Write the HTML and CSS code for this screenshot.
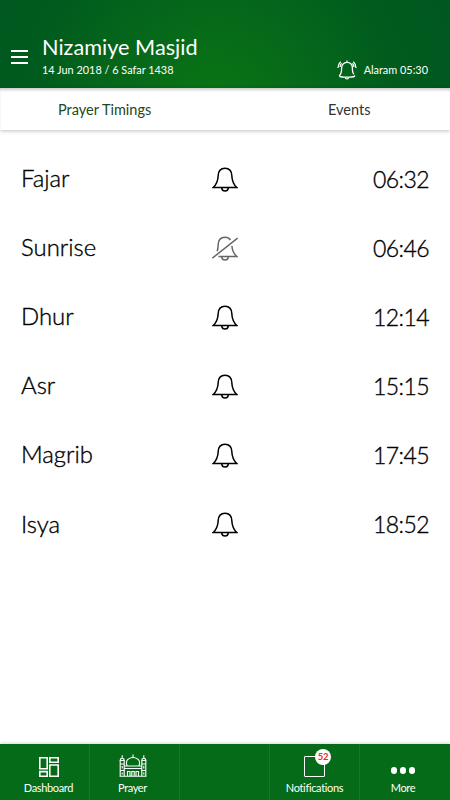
FILE: index.html
```html
<!DOCTYPE html>
<html lang="en">
<head>
    <meta charset="UTF-8">
    <meta name="viewport" content="width=device-width, initial-scale=1.0">
    <title>Nizamiye Masjid</title>
    <link rel="stylesheet" href="styles.css">
</head>
<body>
    <!-- shared bell icons -->
    <svg class="icon-defs" width="0" height="0">
        <symbol id="bell" viewBox="0 0 26 26">
            <path d="M1.2 20.5C5 17 6 13.5 6.2 8.5C6.4 4 8.6 1.2 13 1.2S19.6 4 19.8 8.5C20 13.5 21 17 24.8 20.5Z"/>
            <path d="M9.7 20.8C10 23.2 11.2 24 13 24S16 23.2 16.3 20.8"/>
        </symbol>
        <symbol id="bell-off" viewBox="0 0 26 26">
            <path d="M5.2 15.2C6 13 6.1 11 6.2 8.5C6.4 4 8.6 1.2 13 1.2C15.6 1.2 17.4 2.2 18.5 4M19.9 10C20.2 14 21.3 17.3 24.8 20.5H6.5"/>
            <path d="M9.7 20.8C10 23.2 11.2 24 13 24S16 23.2 16.3 20.8M.3 22.2L25.6 2"/>
        </symbol>
    </svg>

    <header class="header">
        <div class="menu-button">
            <span></span>
            <span></span>
            <span></span>
        </div>
        <div class="masjid">
            <h1>Nizamiye Masjid</h1>
            <p>14 Jun 2018 / 6 Safar 1438</p>
        </div>
        <div class="alarm">
            <svg class="alarm-icon" width="20" height="20" viewBox="0 0 20 20">
                <path d="M2.5 16.3V15.5C4.6 13.5 4.6 12 4.6 8.5C4.6 5 6.5 2.3 10 2.3S15.4 5 15.4 8.5C15.4 12 15.4 13 17 14.2M10 2.3V.4M2.5 16.3C5 17.4 15 17.4 17.5 16.3V15.3"/>
                <path d="M8.3 17.5C8.5 19.4 11.5 19.4 11.7 17.5M3.7 1.7C2 3.2 1 5.2 1 8M16.3 1.7C18 3.2 19 5.2 19 8"/>
                <path d="M4.6 3.4C3.5 4.5 3.1 5.6 3 7M15.4 3.4C16.5 4.5 16.9 5.6 17 7"/>
            </svg>
            <span>Alaram 05:30</span>
        </div>
    </header>

    <div class="tabs">
        <div class="tab active"><span>Prayer Timings</span></div>
        <div class="tab"><span>Events</span></div>
    </div>

    <main class="timings">
        <div class="timing">
            <span class="name">Fajar</span>
            <svg class="bell"><use href="#bell"/></svg>
            <span class="time">06:32</span>
        </div>
        <div class="timing">
            <span class="name">Sunrise</span>
            <svg class="bell muted"><use href="#bell-off"/></svg>
            <span class="time">06:46</span>
        </div>
        <div class="timing">
            <span class="name">Dhur</span>
            <svg class="bell"><use href="#bell"/></svg>
            <span class="time">12:14</span>
        </div>
        <div class="timing">
            <span class="name">Asr</span>
            <svg class="bell"><use href="#bell"/></svg>
            <span class="time">15:15</span>
        </div>
        <div class="timing">
            <span class="name">Magrib</span>
            <svg class="bell"><use href="#bell"/></svg>
            <span class="time">17:45</span>
        </div>
        <div class="timing">
            <span class="name">Isya</span>
            <svg class="bell"><use href="#bell"/></svg>
            <span class="time">18:52</span>
        </div>
    </main>

    <nav class="bottom-nav">
        <div class="nav-item dashboard">
            <svg class="nav-icon" width="20" height="20" viewBox="0 0 20 20">
                <path d="M.8.8H8.2V11.8H.8ZM.8 14.6H8.2V19.2H.8ZM10.8.8H19.2V5.2H10.8ZM10.8 8H19.2V19.2H10.8Z"/>
            </svg>
            <span>Dashboard</span>
        </div>
        <div class="nav-item prayer">
            <svg class="nav-icon thin" width="28" height="23" viewBox="0 0 28 23">
                <path d="M1.2 22.3V6.5H5.2V22.3M22.8 22.3V6.5H26.8V22.3M.5 22.3H27.5M.5 6.5H5.8M22.2 6.5H27.5M1.2 6.2C1.2 3.8 5.2 3.8 5.2 6.2M22.8 6.2C22.8 3.8 26.8 3.8 26.8 6.2M3.2 4.2V1.3M24.8 4.2V1.3"/>
                <path d="M8 11.5C5.8 5.8 10.5 3.8 14 3.2C17.5 3.8 22.2 5.8 20 11.5M14 3.2V.5M5.2 12H22.8M5.2 14.5H22.8M1.2 10H5.2M1.2 16.5H5.2M22.8 10H26.8M22.8 16.5H26.8"/>
                <path d="M8.5 22V17.5H11V22M12.8 22V17.5H15.2V22M17 22V17.5H19.5V22M3.2 12V14.5M3.2 18.5V20.5M24.8 12V14.5M24.8 18.5V20.5"/>
            </svg>
            <span>Prayer</span>
        </div>
        <div class="nav-item"></div>
        <div class="nav-item notifications">
            <div class="box"><span class="badge">52</span></div>
            <span>Notifications</span>
        </div>
        <div class="nav-item more">
            <div class="dots"><i></i><i></i><i></i></div>
            <span>More</span>
        </div>
    </nav>
</body>
</html>
```

FILE: styles.css
```css
* {
    box-sizing: border-box;
}

body {
    margin: 0;
    height: 100vh;
    display: flex;
    flex-direction: column;
    font-family: Lato, sans-serif;
    background-color: #fff;
    color: #000;
    overflow: hidden;
}

svg {
    fill: none;
    stroke: currentColor;
}

.icon-defs {
    position: absolute;
}

.header {
    height: 88px;
    flex-shrink: 0;
    display: flex;
    align-items: flex-end;
    padding: 0 22px 10px 11px;
    color: #fff;
    background: radial-gradient(circle at 215px 105px, #0a7513 0, #06681a 95px, #005b1e 185px, #00561f 300px);
}

.menu-button {
    width: 17px;
    margin: 0 14px 14px 0;
    display: flex;
    flex-direction: column;
    gap: 3.5px;
}

.menu-button span {
    height: 2.4px;
    background-color: #fff;
}

.masjid h1 {
    margin: 0 0 2px;
    font-size: 21.7px;
    line-height: 26px;
    font-weight: 400;
}

.masjid p {
    margin: 0;
    font-size: 10.9px;
    line-height: 16px;
}

.alarm {
    margin-left: auto;
    display: flex;
    align-items: center;
    gap: 7px;
    font-size: 10.9px;
    line-height: 16px;
    height: 16px;
}

.alarm-icon {
    stroke-width: 1.3;
}

.tabs {
    height: 42px;
    flex-shrink: 0;
    display: flex;
    align-items: center;
    font-size: 14.5px;
    box-shadow: 0 1px 4px rgba(0, 0, 0, 0.25), inset 0 3px 3px -1px rgba(0, 0, 0, 0.2);
}

.tab {
    width: 210px;
    padding-left: 88px;
    color: #333;
}

.tab.active {
    width: 240px;
    padding-left: 58px;
    color: #1a4a22;
}

.timings {
    flex: 1;
    padding: 15px 21px 0;
}

.timing {
    height: 69.1px;
    display: grid;
    grid-template-columns: 1fr 26px 1fr;
    align-items: center;
    font-size: 23.9px;
    font-weight: 300;
    -webkit-text-stroke: 0.35px #000;
}

.name {
    padding-bottom: 4px;
}

.time {
    padding-bottom: 2px;
    text-align: right;
    font-size: 23px;
    letter-spacing: -0.6px;
}

.bell {
    width: 26px;
    height: 26px;
    stroke-width: 1.5;
}

.bell.muted {
    color: #666;
}

.bottom-nav {
    height: 56px;
    flex-shrink: 0;
    display: grid;
    grid-template-columns: repeat(5, 90px);
    background-color: #066b19;
    color: #fff;
    font-size: 11px;
    line-height: 14px;
    letter-spacing: -0.35px;
    box-shadow: 0 -1px 3px rgba(0, 0, 0, 0.15);
}

.nav-item {
    display: flex;
    flex-direction: column;
    align-items: center;
    justify-content: flex-end;
    gap: 4px;
    padding-bottom: 5px;
    border-right: 1px solid #197529;
}

.nav-item:last-child {
    border-right: 0;
}

.nav-icon {
    stroke-width: 1.6;
}

.nav-icon.thin {
    stroke-width: 1.1;
}

.dashboard {
    padding-left: 8px;
}

.prayer {
    padding-right: 4px;
}

.more {
    padding-right: 4px;
}

.box {
    position: relative;
    width: 21px;
    height: 21px;
    border: 1px solid #fff;
    border-radius: 1px;
}

.badge {
    position: absolute;
    top: -8px;
    left: 10px;
    width: 16px;
    height: 16px;
    border-radius: 50%;
    background-color: #fff;
    color: #f22;
    font-size: 9.5px;
    font-weight: 700;
    line-height: 16px;
    text-align: center;
}

.dots {
    display: flex;
    gap: 2.5px;
    margin-bottom: 3.5px;
}

.dots i {
    width: 6.5px;
    height: 6.5px;
    border-radius: 50%;
    background-color: #fff;
}
```
